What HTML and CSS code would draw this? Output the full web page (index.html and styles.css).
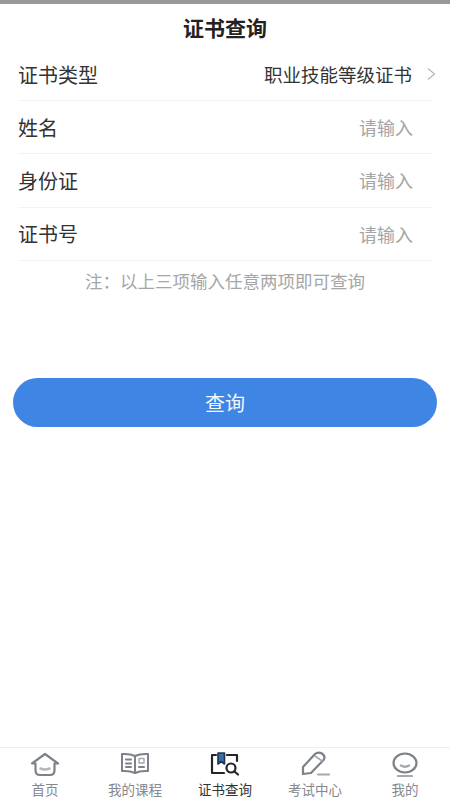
FILE: index.html
```html
<!DOCTYPE html>
<html>
<head>
  <title>证书查询</title>
  <link rel="stylesheet" href="styles.css">
</head>
<body>
  <div class="page">
    <div class="top-strip"></div>
    <div class="title">证书查询</div>

    <div class="form">
      <div class="form-row">
        <span class="label">证书类型</span>
        <span class="value">职业技能等级证书</span>
        <svg class="arrow" width="9" height="14" viewBox="0 0 9 14"><path d="M1 1.5 L7.5 7 L1 12.5" fill="none" stroke="#b5b5b5" stroke-width="1.2"/></svg>
      </div>
      <div class="form-row">
        <span class="label">姓名</span>
        <span class="placeholder">请输入</span>
      </div>
      <div class="form-row">
        <span class="label">身份证</span>
        <span class="placeholder">请输入</span>
      </div>
      <div class="form-row">
        <span class="label">证书号</span>
        <span class="placeholder">请输入</span>
      </div>
    </div>

    <div class="note">注：以上三项输入任意两项即可查询</div>
    <div class="query-btn">查询</div>

    <div class="tabbar">
      <div class="tab-item">
        <svg width="30" height="26" viewBox="0 0 30 26" fill="none" stroke="#7d8188" stroke-width="2.2" stroke-linejoin="round" stroke-linecap="round">
          <path d="M2 12.5 L15 3 L28 12.5 H24.5 V19 Q24.5 24 20 24 H10 Q5.5 24 5.5 19 V12.5 Z"/>
          <path d="M10.5 17.5 Q15 19.5 19.5 17.5" stroke="#b4b6ba" stroke-width="2.6"/>
        </svg>
        <span>首页</span>
      </div>
      <div class="tab-item">
        <svg width="30" height="26" viewBox="0 0 30 26" fill="none" stroke="#7d8188" stroke-width="2" stroke-linejoin="round" stroke-linecap="round">
          <path d="M15 5 Q10 2.5 2 3 V20 Q10 19.5 15 22 Q20 19.5 28 20 V3 Q20 2.5 15 5 Z"/>
          <path d="M15 5 V22"/>
          <path d="M6 8.5 H11 M6 12.5 H11 M6 16 H11"/>
          <path d="M19 7.5 H24 V12 H19 Z" stroke="#a5a8ad" stroke-width="1.4"/>
          <path d="M19 16 H24"/>
        </svg>
        <span>我的课程</span>
      </div>
      <div class="tab-item active">
        <svg width="30" height="26" viewBox="0 0 30 26" fill="none" stroke="#23262b" stroke-width="2.2" stroke-linejoin="round" stroke-linecap="round">
          <path d="M6 4 H2 V22 H14"/>
          <path d="M17 4 H27 V10"/>
          <path d="M8 2 H14.5 V13 L11.2 10.5 L8 13 Z" fill="#3a6ea8" stroke="#1f3350" stroke-width="1.6"/>
          <circle cx="21" cy="17" r="4.5"/>
          <path d="M24.5 20.5 L28 23.5"/>
        </svg>
        <span>证书查询</span>
      </div>
      <div class="tab-item">
        <svg width="30" height="26" viewBox="0 0 30 26" fill="none" stroke="#7d8188" stroke-width="2.2" stroke-linejoin="round" stroke-linecap="round">
          <path d="M3 16 L15 3 Q18 0.5 22 2.5 Q26 5.5 23.5 9 L11 22 L3 23 Z"/>
          <path d="M15 5 L22 10" stroke="#a5a8ad" stroke-width="1.6"/>
          <path d="M18 23.5 H29" stroke="#a5a8ad"/>
        </svg>
        <span>考试中心</span>
      </div>
      <div class="tab-item">
        <svg width="30" height="26" viewBox="0 0 30 26" fill="none" stroke="#7d8188" stroke-width="2.2" stroke-linejoin="round" stroke-linecap="round">
          <ellipse cx="15" cy="12" rx="11.5" ry="9.5"/>
          <path d="M11 14.5 Q15 17 19 14.5" stroke="#a5a8ad" stroke-width="2.6"/>
          <path d="M8 25 H22" stroke="#a5a8ad"/>
        </svg>
        <span>我的</span>
      </div>
    </div>
  </div>
</body>
</html>
```
FILE: styles.css
```css
html, body {
  margin: 0;
  padding: 0;
}
body {
  width: 450px;
  height: 800px;
  overflow: hidden;
  background: #fff;
  font-family: "Noto Sans CJK SC", "Noto Sans", sans-serif;
}
.page {
  height: 800px;
  display: flex;
  flex-direction: column;
}
.top-strip {
  height: 4px;
  background: #999;
}
.title {
  height: 44px;
  line-height: 46px;
  text-align: center;
  font-size: 21px;
  font-weight: 700;
  color: #222;
}
.form {
  margin: 0 18px;
}
.form-row {
  height: 53.2px;
  box-sizing: border-box;
  display: flex;
  align-items: center;
  border-bottom: 1px solid #f3f3f3;
}
.label {
  flex: 1;
  font-size: 20px;
  color: #333;
}
.value {
  font-size: 18.5px;
  color: #333;
}
.arrow {
  margin-left: 15px;
  margin-right: -4px;
}
.placeholder {
  font-size: 18px;
  color: #a5a5a5;
  margin-right: 19px;
}
.note {
  margin-top: 7px;
  text-align: center;
  font-size: 17.5px;
  line-height: 26px;
  color: #a6a6a6;
}
.query-btn {
  margin: 84px 13px 0;
  height: 49px;
  line-height: 49px;
  border-radius: 25px;
  background: #3f86e4;
  color: #f2f6fc;
  text-align: center;
  font-size: 20px;
}
.tabbar {
  margin-top: auto;
  height: 52px;
  display: flex;
  border-top: 1px solid #eee;
}
.tab-item {
  flex: 1;
  display: flex;
  flex-direction: column;
  align-items: center;
  font-size: 13.5px;
  color: #85888d;
  line-height: 18px;
}
.tab-item svg {
  margin-top: 3px;
  margin-bottom: 3px;
}
.tab-item.active {
  color: #333;
}
```
